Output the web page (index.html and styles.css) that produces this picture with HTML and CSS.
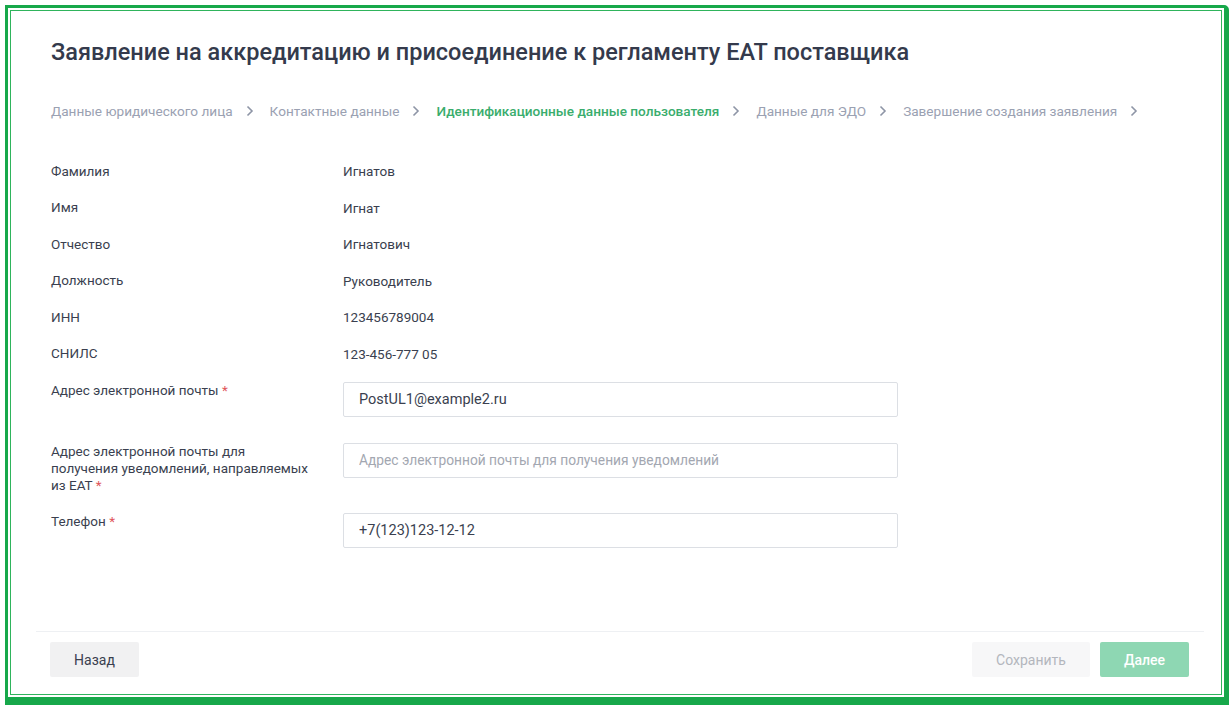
FILE: index.html
```html
<!DOCTYPE html>
<html lang="ru">
<head>
    <meta charset="UTF-8">
    <title>Заявление на аккредитацию</title>
    <link rel="stylesheet" href="styles.css">
</head>
<body>
    <div class="frame">
        <div class="sheet">
            <div class="content">
                <h1>Заявление на аккредитацию и присоединение к регламенту ЕАТ поставщика</h1>

                <nav class="steps">
                    <span class="step">Данные юридического лица</span>
                    <svg class="chev" viewBox="0 0 8 12"><polyline points="1.5,1.5 6,6 1.5,10.5"/></svg>
                    <span class="step">Контактные данные</span>
                    <svg class="chev" viewBox="0 0 8 12"><polyline points="1.5,1.5 6,6 1.5,10.5"/></svg>
                    <span class="step active">Идентификационные данные пользователя</span>
                    <svg class="chev" viewBox="0 0 8 12"><polyline points="1.5,1.5 6,6 1.5,10.5"/></svg>
                    <span class="step">Данные для ЭДО</span>
                    <svg class="chev" viewBox="0 0 8 12"><polyline points="1.5,1.5 6,6 1.5,10.5"/></svg>
                    <span class="step">Завершение создания заявления</span>
                    <svg class="chev" viewBox="0 0 8 12"><polyline points="1.5,1.5 6,6 1.5,10.5"/></svg>
                </nav>

                <div class="info">
                    <div class="row"><span class="label">Фамилия</span><span class="value">Игнатов</span></div>
                    <div class="row"><span class="label">Имя</span><span class="value">Игнат</span></div>
                    <div class="row"><span class="label">Отчество</span><span class="value">Игнатович</span></div>
                    <div class="row"><span class="label">Должность</span><span class="value">Руководитель</span></div>
                    <div class="row"><span class="label">ИНН</span><span class="value">123456789004</span></div>
                    <div class="row"><span class="label">СНИЛС</span><span class="value">123-456-777 05</span></div>
                </div>

                <div class="fields">
                    <div class="field">
                        <label class="label">Адрес электронной почты <span class="req">*</span></label>
                        <input class="input" type="text" value="PostUL1@example2.ru">
                    </div>
                    <div class="field">
                        <label class="label">Адрес электронной почты для получения уведомлений, направляемых из ЕАТ <span class="req">*</span></label>
                        <input class="input" type="text" placeholder="Адрес электронной почты для получения уведомлений">
                    </div>
                    <div class="field">
                        <label class="label">Телефон <span class="req">*</span></label>
                        <input class="input" type="text" value="+7(123)123-12-12">
                    </div>
                </div>
            </div>

            <footer class="actions">
                <button class="btn btn-back">Назад</button>
                <div class="actions-right">
                    <button class="btn btn-save">Сохранить</button>
                    <button class="btn btn-next">Далее</button>
                </div>
            </footer>
        </div>
    </div>
</body>
</html>
```

FILE: styles.css
```css
html, body {
    margin: 0;
    padding: 0;
    background: #fff;
}

body {
    font-family: Roboto, "Noto Sans", Arial, sans-serif;
    color: #3a3f4f;
    height: 709px;
    overflow: hidden;
}

.frame {
    box-sizing: border-box;
    height: 700px;
    margin: 5px 3px 0 5px;
    border-style: solid;
    border-color: #17a84a;
    border-width: 3px 5px 8px 3px;
    border-top-right-radius: 5px;
    padding: 2px;
}

.sheet {
    box-sizing: border-box;
    height: 100%;
    border: 1px solid #2fb45c;
    display: flex;
    flex-direction: column;
}

.content {
    padding: 27px 40px 0 40px;
    flex: 1;
}

h1 {
    margin: 0;
    font-size: 23.5px;
    line-height: 28px;
    font-weight: 500;
    color: #343a4c;
}

.steps {
    display: flex;
    align-items: center;
    margin-top: 35px;
    font-size: 13.6px;
    line-height: 20px;
}

.step {
    color: #9aa1b2;
}

    .step.active {
        color: #3aad6d;
        font-weight: 500;
    }

.chev {
    width: 8px;
    height: 12px;
    margin: 0 16px 0 13px;
    fill: none;
    stroke: #8e95a6;
    stroke-width: 1.6;
}

.info {
    margin-top: 32px;
}

.row {
    display: flex;
    align-items: center;
    height: 36.5px;
    font-size: 13.5px;
}

.label {
    box-sizing: border-box;
    width: 292px;
    flex-shrink: 0;
    padding-right: 29px;
    font-size: 13.5px;
    line-height: 17px;
    color: #3a3f4f;
}

.value {
    color: #3a3f4f;
}

.fields {
    margin-top: 10px;
}

.field {
    display: flex;
    align-items: flex-start;
    min-height: 42px;
    margin-bottom: 19px;
}

.req {
    color: #e0555a;
}

.input {
    box-sizing: border-box;
    width: 555px;
    height: 35px;
    border: 1px solid #dcdfe4;
    border-radius: 2px;
    padding: 0 15px;
    font-family: inherit;
    font-size: 14.5px;
    color: #3a3f4f;
    outline: none;
}

    .input::placeholder {
        color: #a3a7b1;
        font-size: 13.75px;
    }

.actions {
    display: flex;
    justify-content: space-between;
    margin: 0 17px 0 25px;
    padding: 10px 15px 17px 14px;
    border-top: 1px solid #eef0f3;
}

.actions-right {
    display: flex;
    gap: 10px;
}

.btn {
    height: 35px;
    border: none;
    border-radius: 2px;
    font-family: inherit;
    font-size: 14px;
    padding: 0;
}

.btn-back {
    width: 89px;
    background: #f1f1f2;
    color: #3a3f4f;
}

.btn-save {
    width: 118px;
    background: #f7f7f8;
    color: #b3b6bd;
}

.btn-next {
    width: 89px;
    background: #8ed7b3;
    color: #fff;
    font-weight: 500;
}
```
